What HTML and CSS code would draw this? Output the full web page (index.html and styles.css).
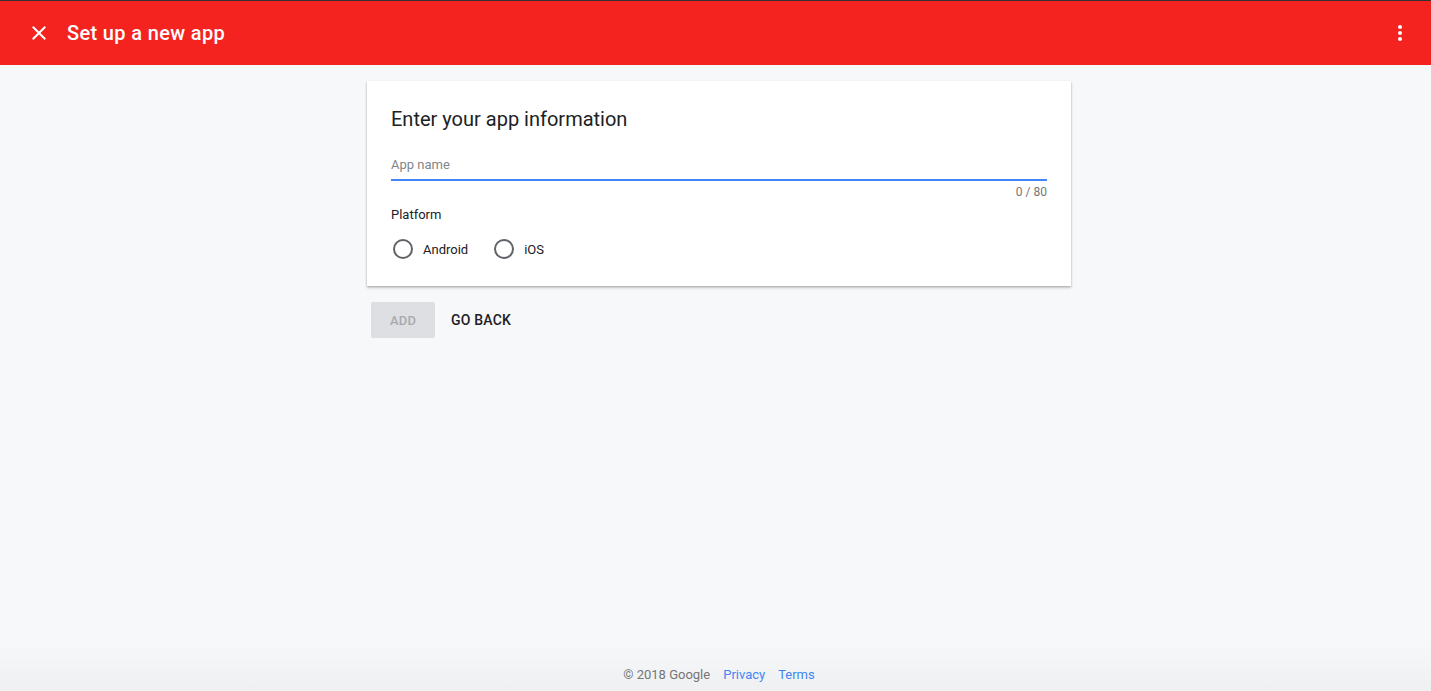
FILE: index.html
```html
<!DOCTYPE html>
<html>
<head>
<meta charset="utf-8">
<link rel="stylesheet" href="styles.css">
</head>
<body>
<div class="page">
  <header class="topbar">
    <button class="icon-btn close" aria-label="Close">
      <svg width="24" height="24" viewBox="0 0 24 24"><path d="M19 6.41 17.59 5 12 10.59 6.41 5 5 6.41 10.59 12 5 17.59 6.41 19 12 13.41 17.59 19 19 17.59 13.41 12z" fill="#fff"/></svg>
    </button>
    <h1 class="title">Set up a new app</h1>
    <span class="spacer"></span>
    <button class="icon-btn more" aria-label="More">
      <svg width="24" height="24" viewBox="0 0 24 24"><circle cx="12" cy="6" r="2" fill="#fff"/><circle cx="12" cy="12" r="2" fill="#fff"/><circle cx="12" cy="18" r="2" fill="#fff"/></svg>
    </button>
  </header>
  <main class="main">
    <div class="column">
      <section class="card">
        <h2 class="card-title">Enter your app information</h2>
        <div class="field">
          <div class="input">App name</div>
          <div class="counter">0 / 80</div>
        </div>
        <div class="label">Platform</div>
        <div class="radios">
          <label class="radio"><span class="circle"></span>Android</label>
          <label class="radio"><span class="circle"></span>iOS</label>
        </div>
      </section>
      <div class="actions">
        <button class="btn btn-add">ADD</button>
        <button class="btn btn-back">GO BACK</button>
      </div>
    </div>
  </main>
  <footer class="footer">
    <span class="copy">© 2018 Google</span>
    <a class="link">Privacy</a>
    <a class="link">Terms</a>
  </footer>
</div>
</body>
</html>
```
FILE: styles.css
```css
* { box-sizing: border-box; }
html, body { margin: 0; padding: 0; height: 100%; }
body {
  font-family: Roboto, "Liberation Sans", Arial, sans-serif;
  background: #f7f8fa;
  color: #202124;
}
.page {
  display: flex;
  flex-direction: column;
  height: 100vh;
}
.topbar {
  height: 65px;
  background: #f4231f;
  border-top: 1px solid #333;
  display: flex;
  align-items: center;
  padding: 0 16px 0 27px;
  flex-shrink: 0;
}
.icon-btn {
  background: none;
  border: 0;
  padding: 0;
  width: 24px;
  height: 24px;
  display: flex;
  cursor: pointer;
}
.title {
  margin: 0 0 0 16px;
  font-size: 20px;
  font-weight: 500;
  color: #fff;
  letter-spacing: 0.35px;
}
.spacer { flex: 1; }
.more { margin-right: 3px; }
.main {
  flex: 1;
  display: flex;
  justify-content: center;
  padding-top: 16px;
  padding-left: 7px;
}
.column { width: 704px; }
.card {
  background: #fff;
  box-shadow: 0 1px 2px rgba(0,0,0,0.25), 0 2px 3px rgba(0,0,0,0.12);
  padding: 26px 24px 24px;
  height: 205px;
}
.card-title {
  margin: 0;
  font-size: 20px;
  font-weight: 400;
  line-height: 24px;
  color: #202124;
}
.field { margin-top: 25px; }
.input {
  font-size: 13px;
  color: #80868b;
  line-height: 18px;
  padding-bottom: 5px;
  border-bottom: 2px solid #4285f4;
}
.counter {
  text-align: right;
  font-size: 12px;
  color: #757575;
  margin-top: 4px;
  line-height: 14px;
}
.label {
  font-size: 13px;
  color: #202124;
  margin-top: 8px;
  line-height: 16px;
}
.radios {
  display: flex;
  gap: 26px;
  margin-top: 16px;
  padding-left: 2px;
}
.radio {
  display: flex;
  align-items: center;
  font-size: 13px;
  color: #202124;
}
.circle {
  width: 20px;
  height: 20px;
  border: 2px solid #5f6368;
  border-radius: 50%;
  margin-right: 10px;
}
.actions {
  display: flex;
  align-items: center;
  margin-top: 16px;
  padding-left: 4px;
  gap: 16px;
}
.btn {
  font-family: inherit;
  border: 0;
  font-size: 13px;
  font-weight: 500;
  height: 36px;
  cursor: pointer;
  letter-spacing: 0.2px;
}
.btn-add {
  width: 64px;
  background: #dddfe2;
  color: #a8aaad;
  border-radius: 2px;
}
.btn-back {
  background: none;
  color: #202124;
  font-size: 14px;
  padding: 0;
}
.footer {
  height: 50px;
  display: flex;
  align-items: center;
  justify-content: center;
  padding-top: 16px;
  padding-left: 7px;
  gap: 13px;
  font-size: 13px;
  background: linear-gradient(rgba(240,241,243,0), #eff0f2);
  flex-shrink: 0;
}
.copy { color: #757575; }
.link { color: #4285f4; }
```
